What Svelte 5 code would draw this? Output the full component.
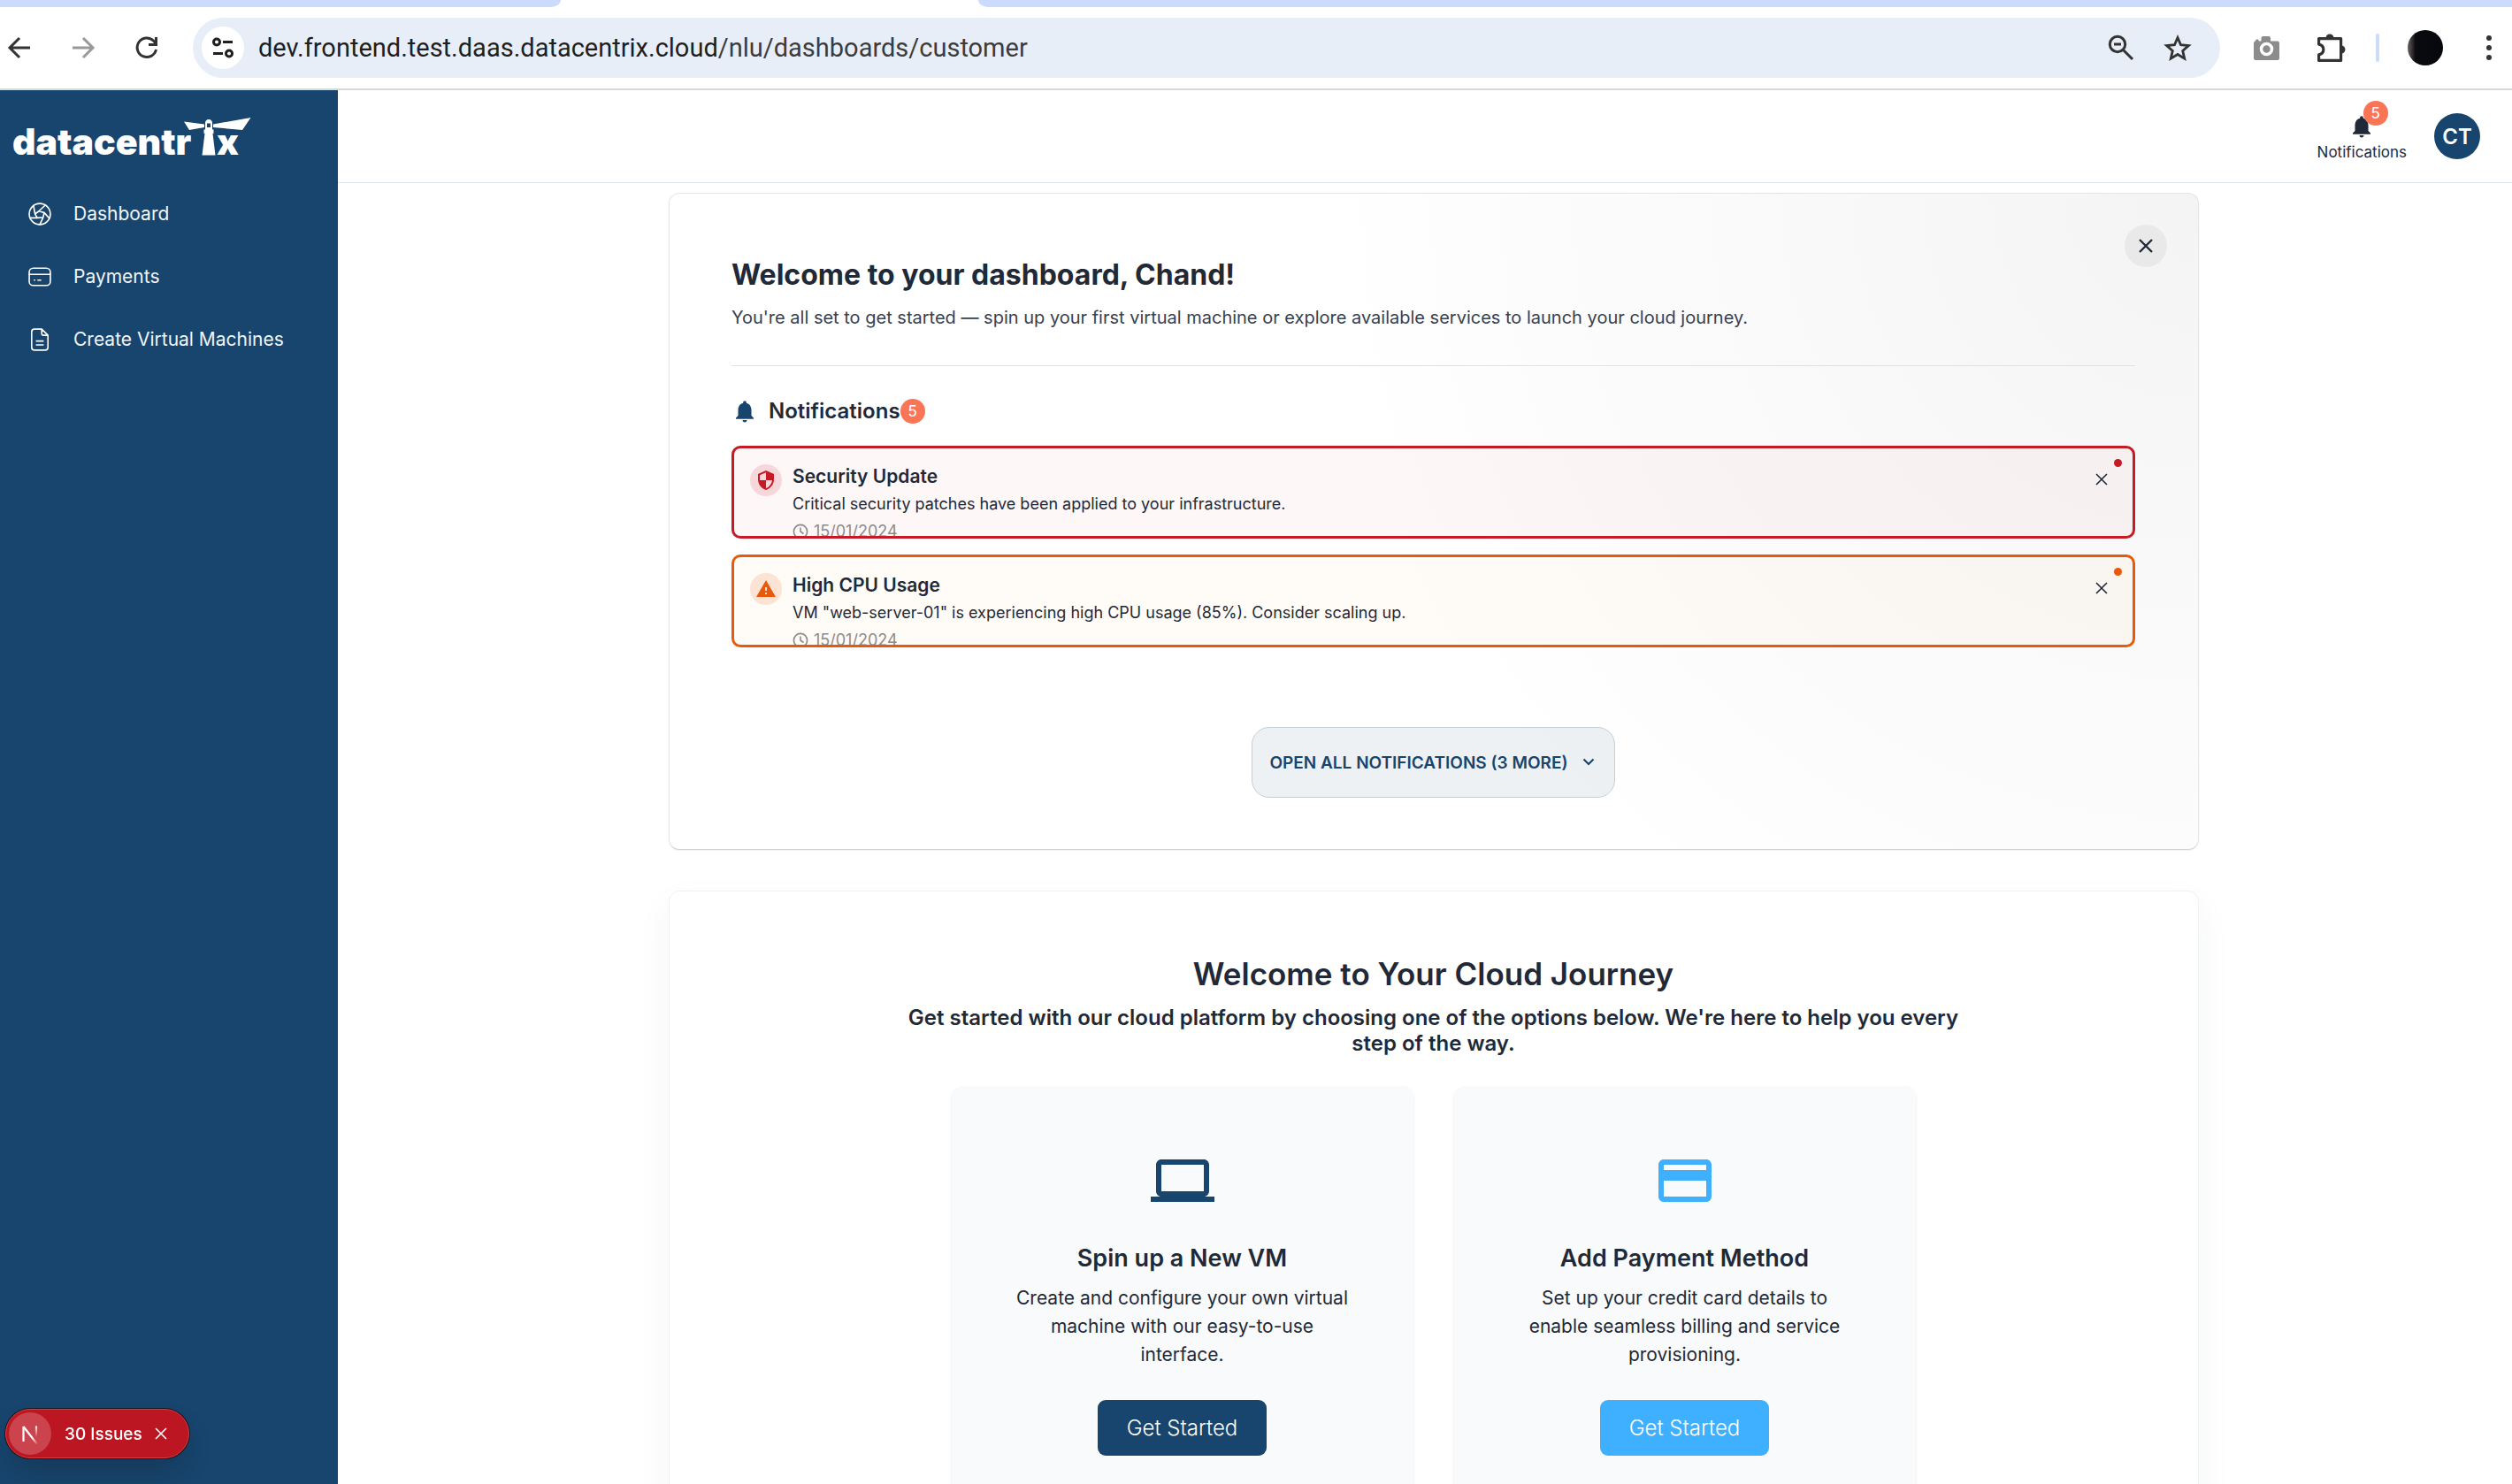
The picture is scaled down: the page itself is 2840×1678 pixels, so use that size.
<script>
  const navItems = [
    { label: 'Dashboard', icon: 'aperture' },
    { label: 'Payments', icon: 'card' },
    { label: 'Create Virtual Machines', icon: 'file' }
  ];

  let alerts = $state([
    {
      id: 1,
      kind: 'critical',
      title: 'Security Update',
      text: 'Critical security patches have been applied to your infrastructure.',
      date: '15/01/2024'
    },
    {
      id: 2,
      kind: 'warning',
      title: 'High CPU Usage',
      text: 'VM "web-server-01" is experiencing high CPU usage (85%). Consider scaling up.',
      date: '15/01/2024'
    }
  ]);

  const options = [
    {
      kind: 'vm',
      title: 'Spin up a New VM',
      text: 'Create and configure your own virtual machine with our easy-to-use interface.',
      path: 'M20 18c1.1 0 1.99-.9 1.99-2L22 6c0-1.100-.9-2-2-2H4c-1.100 0-2 .9-2 2v10c0 1.100.9 2 2 2H0v2h24v-2h-4zM4 6h16v10H4V6z'
    },
    {
      kind: 'pay',
      title: 'Add Payment Method',
      text: 'Set up your credit card details to enable seamless billing and service provisioning.',
      path: 'M20 4H4c-1.110 0-1.990.890-1.990 2L2 18c0 1.110.890 2 2 2h16c1.110 0 2-.890 2-2V6c0-1.110-.890-2-2-2zm0 14H4v-6h16v6zm0-10H4V6h16v2z'
    }
  ];

  const bell =
    'M12 22c1.100 0 2-.9 2-2h-4c0 1.100.890 2 2 2zm6-6v-5c0-3.070-1.640-5.640-4.500-6.320V4c0-.830-.670-1.500-1.500-1.500s-1.500.670-1.500 1.500v.680C7.630 5.360 6 7.920 6 11v5l-2 2v1h16v-1l-2-2z';

  function dismiss(id) {
    alerts = alerts.filter((a) => a.id !== id);
  }
</script>

<div class="window">
  <div class="tabstrip"><span class="tab-left"></span><span class="tab-right"></span></div>

  <div class="toolbar">
    <button class="tool" aria-label="Back">
      <svg class="i28" viewBox="0 0 28 28" fill="none" stroke="#333" stroke-width="3"><path d="M26 14H4M14 3 3 14l11 11" /></svg>
    </button>
    <button class="tool" aria-label="Forward">
      <svg class="i28" viewBox="0 0 28 28" fill="none" stroke="#999" stroke-width="3"><path d="M2 14h22M14 3l11 11-11 11" /></svg>
    </button>
    <button class="tool" aria-label="Reload">
      <svg class="i28" viewBox="0 0 28 28" fill="none" stroke="#333" stroke-width="3"><path d="M24.500 16A10.800 10.800 0 1 1 21.500 6l3 3.500M24.500 2v8.500H16" /></svg>
    </button>
    <div class="omnibox">
      <button class="site" aria-label="Site information">
        <svg class="i28" viewBox="0 0 28 28" fill="none" stroke="#1f1f1f" stroke-width="3"><circle cx="7" cy="7.500" r="3.500" /><path d="M14 7.500h11M3 20.500h11" /><circle cx="21" cy="20.500" r="3.500" /></svg>
      </button>
      <span class="url">dev.frontend.test.daas.datacentrix.cloud<span class="path">/nlu/dashboards/customer</span></span>
      <button class="tool" aria-label="Zoom">
        <svg class="i32" viewBox="0 0 32 32" fill="none" stroke="#333" stroke-width="3"><circle cx="12" cy="12" r="8.700" /><path d="M8 12h8M18.500 18.500 29 29" /></svg>
      </button>
      <button class="tool" aria-label="Bookmark">
        <svg class="i32" viewBox="0 0 32 32" fill="none" stroke="#333" stroke-width="2.800"><path d="m16 4.500 3.500 8.200 8.900.8-6.700 5.900 2 8.700-7.700-4.600-7.700 4.600 2-8.700-6.700-5.900 8.900-.8z" /></svg>
      </button>
    </div>
    <button class="tool camera" aria-label="Capture">
      <svg class="i32" viewBox="0 0 32 32"><path fill="#8c8c8c" d="M3.500 8.500 5 6.500h2l1 2h2.500V4.500L12 3h7.500L21 4.500v4h8.500L31 10v18.500l-1.500 1.500h-26L2 28.500V10z" /><circle cx="16.500" cy="17.500" r="6" fill="#8c8c8c" stroke="#fff" stroke-width="3.500" /></svg>
    </button>
    <button class="tool puzzle" aria-label="Extensions">
      <svg class="i34" viewBox="0 0 34 34"><path fill="none" stroke="#333" stroke-width="3.200" stroke-linejoin="round" d="M2.600 6.600h25v24.800h-25v-6.500c7-1.500 7-10.300 0-11.800z" /><path fill="#333" d="M10.500 6a4.500 4.500 0 0 1 9 0zM28 14.500a4.500 4.500 0 0 1 0 9z" /></svg>
    </button>
    <span class="rule"></span>
    <button class="profile" aria-label="Profile"></button>
    <button class="tool" aria-label="Menu">
      <svg class="dots" viewBox="0 0 8 32" fill="#333"><circle cx="4" cy="5" r="3" /><circle cx="4" cy="16" r="3" /><circle cx="4" cy="27" r="3" /></svg>
    </button>
  </div>

  <div class="app">
    <aside class="sidebar">
      <svg class="logo" viewBox="0 0 272 54" fill="#fff" role="img" aria-label="datacentrix">
        <text x="0" y="42">datacentr</text>
        <text x="231" y="42">x</text>
        <path d="M194 4.500 217 7.500v3.500l-17 3zM269.500 0 227 7.500v3.500l33 3z" />
        <path d="M218 6c0-2 1.500-4 4-4s4 2 4 4v7.500h1.500V18h-1l3 24.500h-15l3-24.500h-1v-4.500h1.500z" />
        <path fill="#17456e" d="M220 6.500h4v4.500h-4z" />
      </svg>
      <nav>
        {#each navItems as item}
          <a href="#{item.icon}">
            <svg class="nav-icon" viewBox="0 0 24 24" fill="none" stroke="#fff" stroke-width="1.500" stroke-linejoin="round" stroke-linecap="round">
              {#if item.icon === 'aperture'}
                <circle cx="12" cy="12" r="11" />
                <path d="m11 9 5.500 1.500-1 5-6 .5L7 12zM11 9l6.500-6M7 12 5.500 3.500M16.500 10.500l5.500 6M15.500 15.500 12 23M9.500 16H2" />
              {:else if item.icon === 'card'}
                <rect x="1" y="3" width="22" height="18" rx="4" />
                <path d="M1 9.500h22M6.300 15.500h.4M10 15.500h3" />
              {:else}
                <path d="M14 1H6.500a3 3 0 0 0-3 3v16a3 3 0 0 0 3 3h11a3 3 0 0 0 3-3V7.500zM14 1v4.500a2 2 0 0 0 2 2h4.500M8.500 13.500h7M8.500 17.500h7" />
              {/if}
            </svg>
            {item.label}
          </a>
        {/each}
      </nav>
    </aside>

    <div class="content">
      <header>
        <button class="bell">
          <svg class="bell-icon" viewBox="0 0 24 24" fill="#1f2937"><path d={bell} /></svg>
          <span class="badge over">5</span>
          Notifications
        </button>
        <button class="avatar">CT</button>
      </header>

      <main>
        <section class="card welcome">
          <button class="close" aria-label="Close">
            <svg class="i16" viewBox="0 0 16 16" fill="none" stroke="#1f2937" stroke-width="2.400"><path d="m1 1 14 14M15 1 1 15" /></svg>
          </button>
          <h1>Welcome to your dashboard, Chand!</h1>
          <p class="lead">You're all set to get started — spin up your first virtual machine or explore available services to launch your cloud journey.</p>
          <hr />
          <h2>
            <svg class="bell-icon lg" viewBox="0 0 24 24" fill="#17456e"><path d={bell} /></svg>
            <span>Notifications</span><span class="badge">5</span>
          </h2>
          <div class="alerts">
            {#each alerts as a (a.id)}
              <article class="alert {a.kind}">
                <span class="disc">
                  <svg class="i24" viewBox="0 0 24 24" fill="currentColor">
                    {#if a.kind === 'critical'}
                      <path d="M12 1 3 5v6c0 5.550 3.840 10.740 9 12 5.160-1.260 9-6.450 9-12V5l-9-4zm0 10.990h7c-.530 4.120-3.280 7.790-7 8.940V12H5V6.300l7-3.110v8.800z" />
                    {:else}
                      <path d="M1 21h22L12 2 1 21zm12-3h-2v-2h2v2zm0-4h-2v-4h2v4z" />
                    {/if}
                  </svg>
                </span>
                <div class="body">
                  <h3>{a.title}</h3>
                  <p>{a.text}</p>
                  <time>
                    <svg class="clock" viewBox="0 0 18 18" fill="none" stroke="currentColor" stroke-width="1.600"><circle cx="9" cy="9" r="7.600" /><path d="M9 4.500V9l3.500 2.500" /></svg>
                    {a.date}
                  </time>
                </div>
                <button class="dismiss" aria-label="Dismiss" onclick={() => dismiss(a.id)}>
                  <svg class="i14" viewBox="0 0 14 14" fill="none" stroke="#1f2937" stroke-width="1.600"><path d="m1 1 12 12M13 1 1 13" /></svg>
                </button>
                <span class="dot"></span>
              </article>
            {/each}
          </div>
          <button class="more">
            OPEN ALL NOTIFICATIONS (3 MORE)
            <svg class="chev" viewBox="0 0 14 10" fill="none" stroke="#17456e" stroke-width="2.200"><path d="m1.500 1.500 5.500 5.500 5.500-5.500" /></svg>
          </button>
        </section>

        <section class="card journey">
          <h2 class="title">Welcome to Your Cloud Journey</h2>
          <p class="intro">Get started with our cloud platform by choosing one of the options below. We're here to help you every step of the way.</p>
          <div class="options">
            {#each options as o}
              <article class="option {o.kind}">
                <svg class="i72" viewBox="0 0 24 24" fill="currentColor"><path d={o.path} /></svg>
                <h3>{o.title}</h3>
                <p>{o.text}</p>
                <button>Get Started</button>
              </article>
            {/each}
          </div>
        </section>
      </main>
    </div>
  </div>

  <div class="issues">
    <span class="n-disc">
      <svg class="i24" viewBox="0 0 24 24" fill="none" stroke-width="2.200">
        <defs>
          <linearGradient id="fade-a" gradientUnits="userSpaceOnUse" x1="8" y1="8" x2="21" y2="24"><stop offset="0.500" stop-color="#fff" /><stop offset="1" stop-color="#fff" stop-opacity="0" /></linearGradient>
          <linearGradient id="fade-b" gradientUnits="userSpaceOnUse" x1="18" y1="3" x2="18" y2="16"><stop offset="0" stop-color="#fff" /><stop offset="1" stop-color="#fff" stop-opacity="0" /></linearGradient>
        </defs>
        <path stroke="#fff" d="M4.500 21V4" /><path stroke="url(#fade-a)" d="M4.500 4 20 24" /><path stroke="url(#fade-b)" d="M19 3.500V16" />
      </svg>
    </span>
    <button class="issues-open">30 Issues</button>
    <button class="issues-close" aria-label="Close">
      <svg class="i14" viewBox="0 0 14 14" fill="none" stroke="#fff" stroke-width="1.600"><path d="m1 1 12 12M13 1 1 13" /></svg>
    </button>
  </div>
</div>

<style>
  :global(body) {
    margin: 0;
    background: #fff;
  }
  * {
    box-sizing: border-box;
  }
  h1, h2, h3, p, hr {
    margin: 0;
  }
  button {
    font: inherit;
    color: inherit;
    border: 0;
    padding: 0;
    background: none;
    display: flex;
    align-items: center;
    justify-content: center;
    cursor: pointer;
  }
  svg {
    display: block;
    flex: none;
  }
  .i14 { width: 14px; height: 14px; }
  .i16 { width: 16px; height: 16px; }
  .i24 { width: 24px; height: 24px; }
  .i28 { width: 28px; height: 28px; }
  .i32 { width: 32px; height: 32px; }
  .i34 { width: 34px; height: 34px; }
  .i72 { width: 72px; height: 72px; }

  .window {
    height: 100vh;
    display: flex;
    flex-direction: column;
    overflow: hidden;
    font-family: Inter, 'Noto Sans', sans-serif;
    color: #1f2937;
  }

  .tabstrip {
    display: flex;
    justify-content: space-between;
    height: 8px;
    flex: none;
  }
  .tab-left,
  .tab-right {
    background: #cbdafd;
  }
  .tab-left {
    width: 634px;
    border-bottom-right-radius: 18px 12px;
  }
  .tab-right {
    flex: 1;
    margin-left: 472px;
    border-bottom-left-radius: 18px 12px;
  }

  .toolbar {
    flex: none;
    height: 94px;
    display: flex;
    align-items: center;
    padding: 0 22px 0 8px;
    border-bottom: 2px solid #d7dadb;
  }
  .toolbar > .tool + .tool {
    margin-left: 44px;
  }
  .omnibox {
    flex: 1;
    height: 68px;
    margin-left: 38px;
    padding: 0 32px 0 10px;
    border-radius: 34px;
    background: #e8eef8;
    display: flex;
    align-items: center;
    gap: 32px;
  }
  .site {
    width: 48px;
    height: 48px;
    border-radius: 50%;
    background: #fff;
  }
  .url {
    flex: 1;
    margin-left: -16px;
    font-family: Roboto, sans-serif;
    font-size: 29px;
    line-height: 36px;
    color: #1f1f1f;
  }
  .path {
    color: #3c3c3c;
  }
  .camera {
    margin-left: 36px;
  }
  .toolbar > .puzzle.puzzle {
    margin-left: 41px;
  }
  .rule {
    width: 4px;
    height: 32px;
    margin: 0 32px 0 33px;
    border-radius: 2px;
    background: #cbdafd;
  }
  .profile {
    width: 40px;
    height: 40px;
    margin-right: 48px;
    border-radius: 50%;
    background: linear-gradient(90deg, #6b6161, #0a0b0f 22%, #05070c);
  }
  .dots {
    width: 8px;
    height: 32px;
  }

  .app {
    flex: 1;
    min-height: 0;
    display: flex;
  }
  .sidebar {
    width: 382px;
    flex: none;
    background: #17456e;
    padding: 31px 14px;
  }
  .logo {
    width: 272px;
    height: 54px;
  }
  .logo text {
    font-family: Inter, sans-serif;
    font-weight: 900;
    font-size: 41px;
  }
  nav {
    display: flex;
    flex-direction: column;
    gap: 35px;
    margin-top: 37px;
    padding-left: 18px;
  }
  nav a {
    display: flex;
    align-items: center;
    gap: 25px;
    color: #f1f5f9;
    font-size: 21px;
    line-height: 36px;
    text-decoration: none;
  }
  .nav-icon {
    width: 26px;
    height: 26px;
  }

  .content {
    flex: 1;
    min-width: 0;
    display: flex;
    flex-direction: column;
  }
  header {
    height: 105px;
    flex: none;
    display: flex;
    align-items: center;
    justify-content: flex-end;
    gap: 31px;
    padding-right: 36px;
    border-bottom: 1px solid #dfe5ea;
  }
  .bell {
    position: relative;
    flex-direction: column;
    gap: 2px;
    padding-top: 4px;
    font-size: 17px;
    line-height: 24px;
  }
  .bell-icon {
    width: 30px;
    height: 30px;
  }
  .badge {
    width: 28px;
    height: 28px;
    border-radius: 50%;
    background: #fa7556;
    color: #fff;
    font-size: 17px;
    font-weight: 400;
    line-height: 28px;
    text-align: center;
  }
  .over {
    position: absolute;
    left: 52px;
    top: -10px;
  }
  .avatar {
    width: 52px;
    height: 52px;
    border-radius: 50%;
    background: #17456e;
    color: #fff;
    font-size: 24px;
    font-weight: 600;
  }

  main {
    flex: 1;
    min-height: 0;
    overflow: hidden;
    padding: 11px 0 0 20px;
  }
  .card {
    position: relative;
    max-width: 1730px;
    margin: 0 auto;
    padding: 72px 71px 71px 70px;
    border: 1px solid #e3e5e8;
    border-radius: 12px;
  }
  .welcome {
    padding-bottom: 58px;
    border-bottom-color: #d0d2d4;
    background: radial-gradient(circle at 100% 0, #f4f4f4, #fff 53%);
    box-shadow: 0 1px 2px rgba(0, 0, 0, 0.06);
  }
  .close {
    position: absolute;
    top: 35px;
    right: 35px;
    width: 48px;
    height: 48px;
    border-radius: 50%;
    background: #e9e9e9;
  }
  h1 {
    font-size: 32px;
    line-height: 40px;
    font-weight: 700;
  }
  .lead {
    margin-top: 12px;
    font-size: 20px;
    line-height: 32px;
    color: #374151;
  }
  hr {
    margin: 38px 0 35px;
    border: 0;
    border-top: 1px solid #dfe1e6;
  }
  .welcome h2 {
    display: flex;
    align-items: center;
    font-size: 24px;
    line-height: 32px;
    font-weight: 600;
  }
  .lg {
    margin-right: 12px;
  }
  .alerts {
    display: flex;
    flex-direction: column;
    gap: 18px;
    margin-top: 23px;
  }
  .alert {
    position: relative;
    display: flex;
    gap: 12px;
    height: 105px;
    padding: 18px 28px 0 18px;
    overflow: hidden;
    border: 3px solid currentColor;
    border-radius: 10px;
  }
  .critical {
    color: #c61b24;
    background: rgba(198, 27, 36, 0.035);
  }
  .warning {
    color: #e8590c;
    background: rgba(255, 160, 50, 0.04);
  }
  .disc {
    width: 36px;
    height: 36px;
    flex: none;
    display: flex;
    align-items: center;
    justify-content: center;
    border-radius: 50%;
    background: #f8d7da;
  }
  .warning .disc {
    background: #fce3d4;
  }
  .body {
    flex: 1;
    display: flex;
    flex-direction: column;
    gap: 3px;
    color: #1f2937;
  }
  .body h3 {
    font-size: 21px;
    line-height: 28px;
    font-weight: 600;
  }
  .body p {
    font-size: 18px;
    line-height: 28px;
  }
  time {
    display: flex;
    align-items: center;
    gap: 6px;
    font-size: 18px;
    line-height: 28px;
    color: #8c8c8c;
  }
  .clock {
    width: 18px;
    height: 18px;
  }
  .dismiss {
    align-self: flex-start;
    padding-top: 10px;
  }
  .dot {
    position: absolute;
    top: 12px;
    right: 12px;
    width: 9px;
    height: 9px;
    border-radius: 50%;
    background: currentColor;
  }
  .more {
    gap: 16px;
    height: 80px;
    margin: 90px auto 0;
    padding: 0 22px 0 19px;
    border: 1px solid #c0cfdc;
    border-radius: 20px;
    background: rgba(23, 69, 110, 0.075);
    color: #17456e;
    font-size: 19px;
    font-weight: 600;
  }
  .chev {
    width: 14px;
    height: 10px;
  }

  .journey {
    margin-top: 46px;
    padding-top: 70px;
    border-color: #f0f1f2;
    background: #fff;
    box-shadow: 0 16px 40px rgba(30, 50, 80, 0.05);
    text-align: center;
  }
  .title {
    font-size: 35px;
    line-height: 46px;
    font-weight: 600;
  }
  .intro {
    max-width: 1200px;
    margin: 12px auto 34px;
    font-size: 24px;
    line-height: 29px;
    font-weight: 600;
  }
  .options {
    display: flex;
    justify-content: center;
    gap: 46px;
  }
  .option {
    width: 522px;
    display: flex;
    flex-direction: column;
    align-items: center;
    padding: 71px 68px;
    border-radius: 12px;
    background: #f9fafc;
    box-shadow: 0 2px 3px rgba(0, 0, 0, 0.1);
  }
  .vm { color: #17456e; }
  .pay { color: #3fb0ff; }
  .option h3 {
    margin-top: 35px;
    color: #1f2937;
    font-size: 27px;
    line-height: 34px;
    font-weight: 600;
  }
  .option p {
    margin-top: 12px;
    color: #1f2937;
    font-size: 21px;
    line-height: 32px;
  }
  .option button {
    height: 63px;
    margin-top: 35px;
    padding: 0 33px;
    border-radius: 9px;
    background: #17456e;
    color: #fff;
    font-size: 24px;
    font-weight: 300;
  }
  .pay button {
    background: #3fb0ff;
  }

  .issues {
    position: fixed;
    left: 6px;
    bottom: 29px;
    height: 56px;
    display: flex;
    align-items: center;
    padding: 0 24px 0 3px;
    border: 1px solid #d93a46;
    border-radius: 28px;
    background: #bb1622;
    box-shadow: 0 0 0 1px #171717, 0 16px 32px -8px rgba(20, 20, 20, 0.3);
    color: #fff;
    font-size: 19px;
    font-weight: 500;
  }
  .n-disc {
    width: 48px;
    height: 48px;
    display: flex;
    align-items: center;
    justify-content: center;
    margin-right: 15px;
    border-radius: 50%;
    background: #cb434c;
  }
  .issues-close {
    margin-left: 14px;
  }
</style>
